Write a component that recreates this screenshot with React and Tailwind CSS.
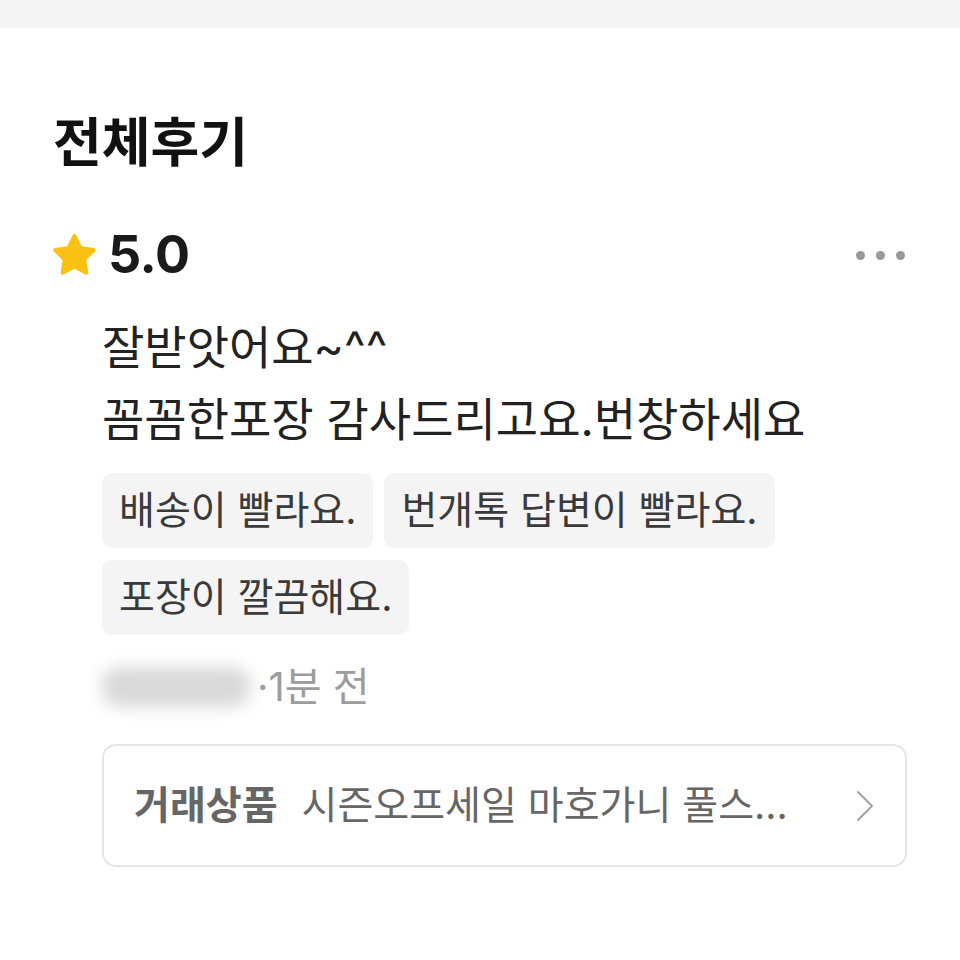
const TAGS = ['배송이 빨라요.', '번개톡 답변이 빨라요.', '포장이 깔끔해요.']

function Star() {
  return (
    <svg viewBox="0 0 24 24" className="w-[55px] h-[55px] -ml-[6px]">
      <path
        d="M12 2.6c.35 0 .66.2.8.52l2.37 4.8 5.3.77c.35.05.64.3.75.63.1.34.02.7-.23.95l-3.84 3.74.9 5.28c.06.35-.08.7-.37.9-.28.2-.66.23-.97.07L12 17.78l-4.74 2.49c-.31.16-.69.13-.97-.07-.29-.2-.43-.55-.37-.9l.9-5.28-3.84-3.74a.92.92 0 0 1-.23-.95c.11-.34.4-.58.75-.63l5.3-.77 2.37-4.8c.15-.32.46-.52.83-.52z"
        fill="#f8c113"
      />
    </svg>
  )
}

export default function App() {
  return (
    <div className="w-[960px] h-[960px] bg-white overflow-hidden" style={{ fontFamily: 'Inter, "Noto Sans CJK KR", sans-serif' }}>
      <div className="h-[28px] bg-[#f4f4f4]" />

      <div className="px-[53px] pt-[85px]">
        {/* Header */}
        <h1 className="text-[53px] leading-[60px] font-bold text-[#111]">전체후기</h1>

        {/* Rating row */}
        <div className="mt-[52px] h-[60px] flex items-center justify-between">
          <div className="flex items-center gap-[6px]">
            <Star />
            <span className="text-[52px] font-bold text-[#1a1a1a] tracking-[-0.5px]">5.0</span>
          </div>
          <div className="flex items-center gap-[11px] pr-[2px]">
            <span className="w-[9px] h-[9px] rounded-full bg-[#999]" />
            <span className="w-[9px] h-[9px] rounded-full bg-[#999]" />
            <span className="w-[9px] h-[9px] rounded-full bg-[#999]" />
          </div>
        </div>

        <div className="pl-[49px]">
          {/* Review body */}
          <p className="mt-[26px] text-[46px] leading-[72px] text-[#222]">
            잘받앗어요~^^
            <br />
            꼼꼼한포장 감사드리고요.번창하세요
          </p>

          {/* Tags */}
          <div className="mt-[18px] flex flex-wrap gap-x-[11px] gap-y-[12px] w-[720px]">
            {TAGS.map(t => (
              <span key={t} className="h-[75px] px-[17px] flex items-center rounded-[10px] bg-[#f4f4f4] text-[39px] text-[#3a3a3a]">
                {t}
              </span>
            ))}
          </div>

          {/* Author (blurred) + time */}
          <div className="mt-[28px] h-[48px] flex items-center -ml-[7px]">
            <div className="w-[162px] h-[48px] flex items-center justify-center">
              <div className="w-[150px] h-[40px] rounded-full bg-[#d9d9d9] blur-[8px]" />
            </div>
            <span className="text-[40px] text-[#9c9c9c]">·1분 전</span>
          </div>

          {/* Product card */}
          <div className="mt-[33px] h-[123px] border-2 border-[#e6e6e6] rounded-[14px] flex items-center pl-[30px] pr-[30px]">
            <span className="text-[39px] font-bold text-[#666]">거래상품</span>
            <span className="ml-[24px] flex-1 text-[39px] text-[#666]">시즌오프세일 마호가니 풀스...</span>
            <svg viewBox="0 0 20 32" className="w-[20px] h-[32px]" fill="none">
              <path d="M3 2l14 14L3 30" stroke="#a3a3a3" strokeWidth="2" strokeLinecap="round" strokeLinejoin="round" />
            </svg>
          </div>
        </div>
      </div>
    </div>
  )
}
